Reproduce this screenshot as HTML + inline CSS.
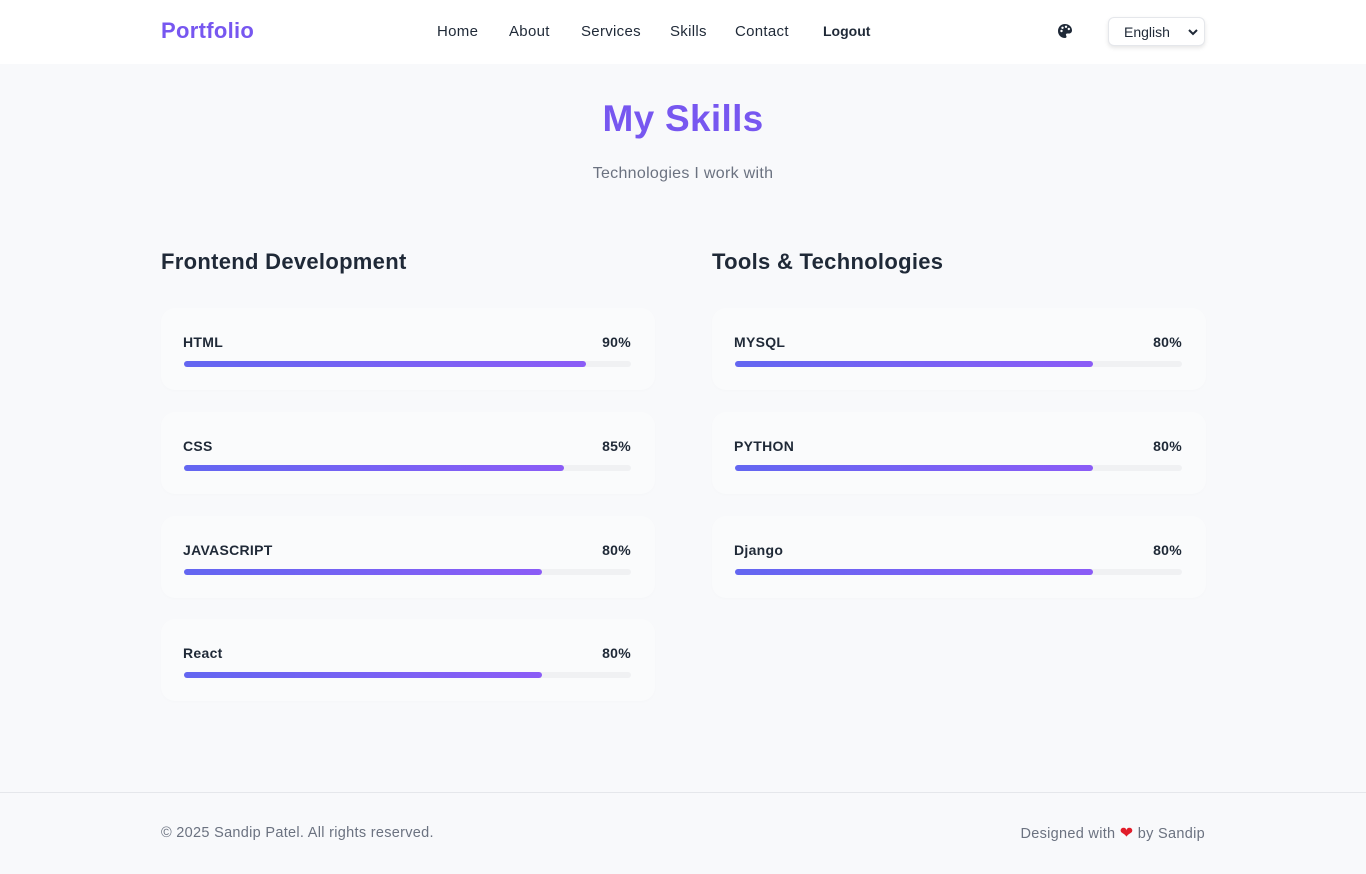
<!DOCTYPE html>
<html><head><meta charset="utf-8"><style>
*{margin:0;padding:0;box-sizing:border-box}
body{width:1366px;height:874px;background:#f8f9fb;font-family:"Liberation Sans",sans-serif;color:#1f2937;position:relative;overflow:hidden}
.nav{position:absolute;top:0;left:0;width:1366px;height:64px;background:#fff}
.logo{position:absolute;left:161px;top:18px;font-size:22px;font-weight:bold;color:#7757f0;letter-spacing:.3px}
.links span{position:absolute;top:23px;font-size:15px;color:#1f2937;letter-spacing:.3px}
.pal{position:absolute;left:1057px;top:23px}
.sel{position:absolute;left:1108px;top:17px;width:97px;height:29px;border:1px solid #e5e7eb;border-radius:6px;background:#fff;box-shadow:0 2px 4px rgba(0,0,0,.1);font-size:14px;padding:6px 0 0 15px;color:#1f2937}
.sel svg{position:absolute;right:6px;top:11px}
h1{position:absolute;top:98px;width:100%;text-align:center;font-size:37px;color:#7757f0;letter-spacing:.3px}
.sub{position:absolute;top:165px;width:100%;text-align:center;font-size:16px;color:#6b7280;letter-spacing:.3px}
h2{position:absolute;top:249px;font-size:22px;color:#1f2937;letter-spacing:.3px}
.card{position:absolute;width:494px;height:82px;background:#fafbfc;border-radius:14px;box-shadow:0 1px 3px rgba(0,0,0,.015)}
.card .n{position:absolute;left:22px;top:26px;font-size:14px;font-weight:bold;letter-spacing:.3px}
.card .p{position:absolute;right:24px;top:26px;font-size:14px;font-weight:bold;letter-spacing:.3px}
.card .t{position:absolute;left:23px;top:53px;width:447px;height:6px;border-radius:3px;background:#f0f1f3}
.card .f{height:6px;border-radius:3px;background:linear-gradient(90deg,#6366f1,#8b5cf6)}
.foot{position:absolute;top:792px;left:0;width:1366px;height:82px;border-top:1px solid #e5e7eb}
.foot .l{position:absolute;left:161px;top:32px;font-size:14.5px;line-height:17px;color:#6b7280;letter-spacing:.3px}
.foot .r{position:absolute;right:161px;top:32px;font-size:14.5px;line-height:17px;color:#6b7280;letter-spacing:.3px}
</style></head><body>
<div class="nav"><div class="logo">Portfolio</div>
<div class="links"><span style="left:437px">Home</span><span style="left:509px">About</span><span style="left:581px">Services</span><span style="left:670px">Skills</span><span style="left:735px">Contact</span><span style="left:823px;font-weight:bold;font-size:14px;top:23px;letter-spacing:0">Logout</span></div>
<svg class="pal" width="16" height="16" viewBox="0 0 16 16"><path d="M8 1C4 1 1 4 1 8s3 7 7 7c1 0 1.5-.7 1.5-1.4 0-.8-.6-1-.6-1.8 0-.7.6-1.3 1.3-1.3H12c1.7 0 3-1.3 3-3C15 3.8 12 1 8 1z" fill="#1f2937"/><circle cx="4.5" cy="8" r="1.2" fill="#fff"/><circle cx="5.5" cy="4.8" r="1.2" fill="#fff"/><circle cx="9" cy="3.8" r="1.2" fill="#fff"/><circle cx="11.8" cy="6" r="1.2" fill="#fff"/></svg>
<div class="sel">English<svg width="10" height="7" viewBox="0 0 10 7"><path d="M1 1l4 4 4-4" stroke="#1f2937" stroke-width="2" fill="none"/></svg></div></div>
<h1>My Skills</h1>
<div class="sub">Technologies I work with</div>
<h2 style="left:161px">Frontend Development</h2>
<h2 style="left:712px">Tools &amp; Technologies</h2>
<div class="card" style="left:161px;top:308px"><div class="n">HTML</div><div class="p">90%</div><div class="t"><div class="f" style="width:402px"></div></div></div>
<div class="card" style="left:161px;top:412px"><div class="n">CSS</div><div class="p">85%</div><div class="t"><div class="f" style="width:380px"></div></div></div>
<div class="card" style="left:161px;top:516px"><div class="n">JAVASCRIPT</div><div class="p">80%</div><div class="t"><div class="f" style="width:358px"></div></div></div>
<div class="card" style="left:161px;top:619px"><div class="n">React</div><div class="p">80%</div><div class="t"><div class="f" style="width:358px"></div></div></div>
<div class="card" style="left:712px;top:308px"><div class="n">MYSQL</div><div class="p">80%</div><div class="t"><div class="f" style="width:358px"></div></div></div>
<div class="card" style="left:712px;top:412px"><div class="n">PYTHON</div><div class="p">80%</div><div class="t"><div class="f" style="width:358px"></div></div></div>
<div class="card" style="left:712px;top:516px"><div class="n">Django</div><div class="p">80%</div><div class="t"><div class="f" style="width:358px"></div></div></div>
<div class="foot"><div class="l">© 2025 Sandip Patel. All rights reserved.</div><div class="r">Designed with <span style="color:#e11d2a;font-size:16px;line-height:17px">❤</span> by Sandip</div></div>
</body></html>
